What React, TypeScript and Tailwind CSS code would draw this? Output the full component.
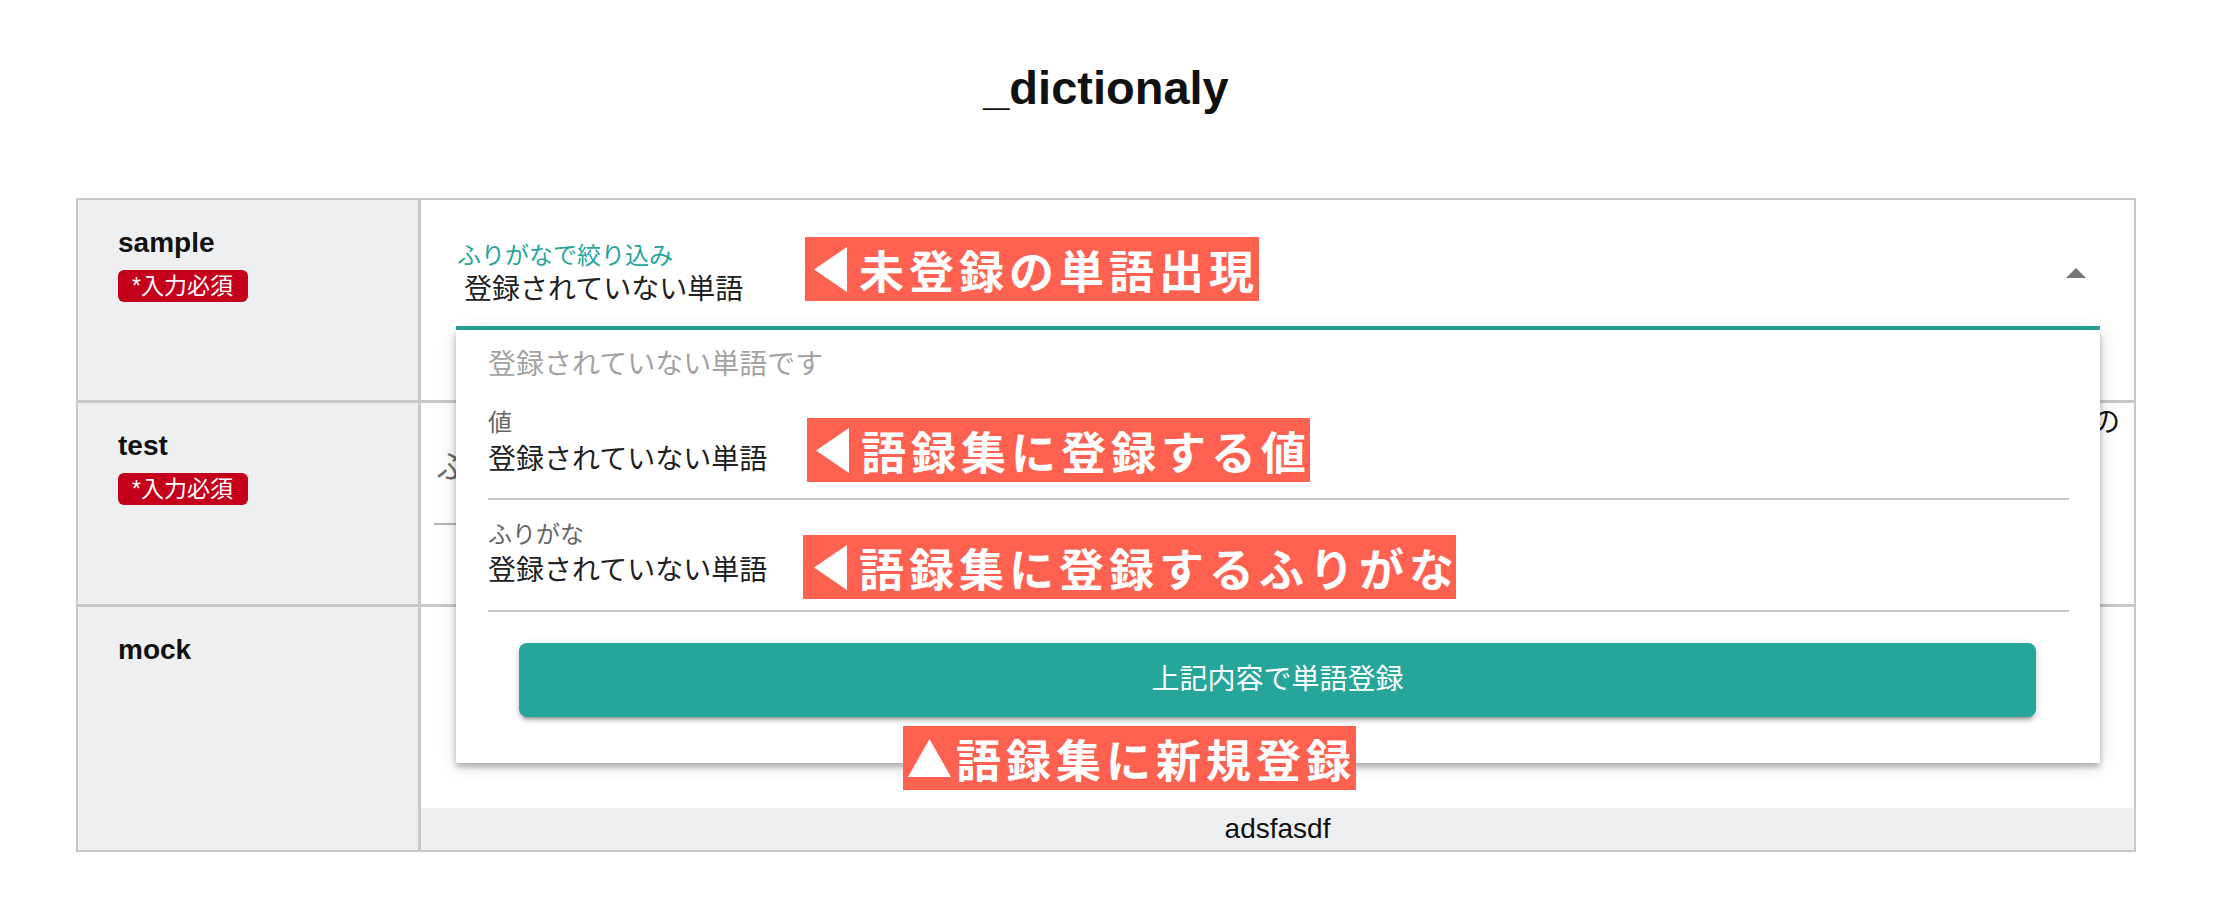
import React from "react";

const sans = "font-['Liberation_Sans','Noto_Sans_CJK_JP',sans-serif]";

function LeftTri() {
  return (
    <svg width="33" height="45" viewBox="0 0 33 45" className="shrink-0">
      <polygon points="33,0 33,45 0,22.5" fill="#fff" />
    </svg>
  );
}

function UpTri() {
  return (
    <svg width="43" height="38" viewBox="0 0 43 38" className="shrink-0">
      <polygon points="21.5,0 43,38 0,38" fill="#fff" />
    </svg>
  );
}

interface NoteProps {
  className: string;
  textClass: string;
  text: string;
  up?: boolean;
}

// red callouts pasted over the screenshot
function Note({ className, textClass, text, up }: NoteProps) {
  return (
    <div className={`absolute z-20 flex h-[64px] items-center bg-[#ff6150] ${className}`}>
      {up ? <UpTri /> : <LeftTri />}
      <span
        className={`whitespace-nowrap text-[45px] font-bold leading-none text-white font-['Noto_Sans_CJK_JP',sans-serif] ${textClass}`}
      >
        {text}
      </span>
    </div>
  );
}

function Badge() {
  return (
    <div className="mt-[13px] flex h-[32px] w-[130px] items-center rounded-[6px] bg-[#c4001c] pl-[14px] text-[23px] leading-none text-white">
      *入力必須
    </div>
  );
}

function Popup() {
  return (
    <div className="absolute left-0 right-0 top-full z-10 bg-white pl-[32px] pr-[31px] pt-[21px] pb-[46px] shadow-[0_4px_6px_rgba(0,0,0,0.28),0_2px_22px_rgba(0,0,0,0.12)]">
      <p className="text-[28px] leading-[28px] text-[#a3a3a3]">登録されていない単語です</p>
      <p className="mt-[32px] text-[24px] leading-[24px] text-[#666]">値</p>
      <p className="mt-[11px] text-[28px] leading-[28px] text-[#212121]">登録されていない単語</p>
      <div className="mt-[24px] h-[2px] bg-[#c8c8c8]" />
      <p className="mt-[23px] text-[24px] leading-[24px] text-[#666]">ふりがな</p>
      <p className="mt-[10px] text-[28px] leading-[28px] text-[#212121]">登録されていない単語</p>
      <div className="mt-[25px] h-[2px] bg-[#c8c8c8]" />
      <button className="ml-[31px] mr-[33px] mt-[31px] flex h-[74px] w-[1517px] items-center justify-center rounded-[8px] bg-[#26a69a] text-[28px] leading-none text-white shadow-[0_6px_2px_-4px_rgba(0,0,0,0.2),0_4px_4px_rgba(0,0,0,0.14),0_2px_10px_rgba(0,0,0,0.12)]">
        上記内容で単語登録
      </button>
    </div>
  );
}

export default function App() {
  return (
    <div className={`relative h-[904px] w-[2220px] overflow-hidden bg-white text-[#212121] ${sans}`}>
      <h1 className="pr-[8px] pt-[64px] text-center text-[47px] font-bold leading-none text-[#111]">_dictionaly</h1>

      <div className="ml-[76px] mt-[87px] w-[2060px] border-2 border-[#c8c8c8]">
        {/* row 1 */}
        <div className="flex h-[203px] border-b-[3px] border-[#c8c8c8]">
          <div className="w-[343px] shrink-0 border-r-[3px] border-[#c8c8c8] bg-[#eeeff1] pl-[40px] pt-[29px]">
            <div className="text-[28px] font-bold leading-none text-[#111]">sample</div>
            <Badge />
          </div>
          <div className="flex-1 pl-[35px] pr-[34px] pt-[44px]">
            <div className="relative">
              <p className="pl-[1px] text-[24px] leading-[24px] text-[#26a69a]">ふりがなで絞り込み</p>
              <p className="mt-[8px] pl-[8px] text-[28px] leading-[28px] text-[#212121]">登録されていない単語</p>
              <svg width="20" height="10" viewBox="0 0 20 10" className="absolute right-[14px] top-[24px]">
                <polygon points="10,0 20,10 0,10" fill="#757575" />
              </svg>
              <div className="mt-[22px] h-[4px] bg-[#26a69a]" />
              <Popup />
            </div>
          </div>
        </div>

        {/* row 2 */}
        <div className="flex h-[204px] border-b-[3px] border-[#c8c8c8]">
          <div className="w-[343px] shrink-0 border-r-[3px] border-[#c8c8c8] bg-[#eeeff1] pl-[40px] pt-[29px]">
            <div className="text-[28px] font-bold leading-none text-[#111]">test</div>
            <Badge />
          </div>
          <div className="flex-1 pt-[6px]">
            <p className="whitespace-nowrap pr-[14px] text-right text-[28px] leading-[28px] text-[#111]">
              語録集に登録されていない単語は、ふりがなを入力して新しく登録できます。登録済みの
            </p>
            <div className="ml-[13px] mr-[34px]">
              <p className="mt-[14px] pl-[2px] text-[32px] leading-[32px] text-[#6d6d6d]">ふりがなを入力</p>
              <div className="mt-[40px] h-[2px] bg-[#b5b5b5]" />
            </div>
          </div>
        </div>

        {/* row 3 */}
        <div className="flex h-[243px]">
          <div className="w-[343px] shrink-0 border-r-[3px] border-[#c8c8c8] bg-[#eeeff1] pl-[40px] pt-[29px]">
            <div className="text-[28px] font-bold leading-none text-[#111]">mock</div>
          </div>
          <div className="flex flex-1 flex-col">
            <div className="flex-1" />
            <div className="flex h-[42px] items-center justify-center bg-[#eeeff1] text-[28px] leading-none text-[#111]">
              adsfasdf
            </div>
          </div>
        </div>
      </div>

      <Note className="left-[805px] top-[237px] w-[454px] pl-[9px]" textClass="ml-[12px] tracking-[5px]" text="未登録の単語出現" />
      <Note className="left-[807px] top-[418px] w-[503px] pl-[9px]" textClass="ml-[12px] tracking-[5px]" text="語録集に登録する値" />
      <Note className="left-[803px] top-[535px] w-[653px] pl-[11px]" textClass="ml-[12px] tracking-[5px]" text="語録集に登録するふりがな" />
      <Note className="left-[903px] top-[726px] w-[453px] pl-[5px]" textClass="ml-[5px] tracking-[5px]" text="語録集に新規登録" up />
    </div>
  );
}
